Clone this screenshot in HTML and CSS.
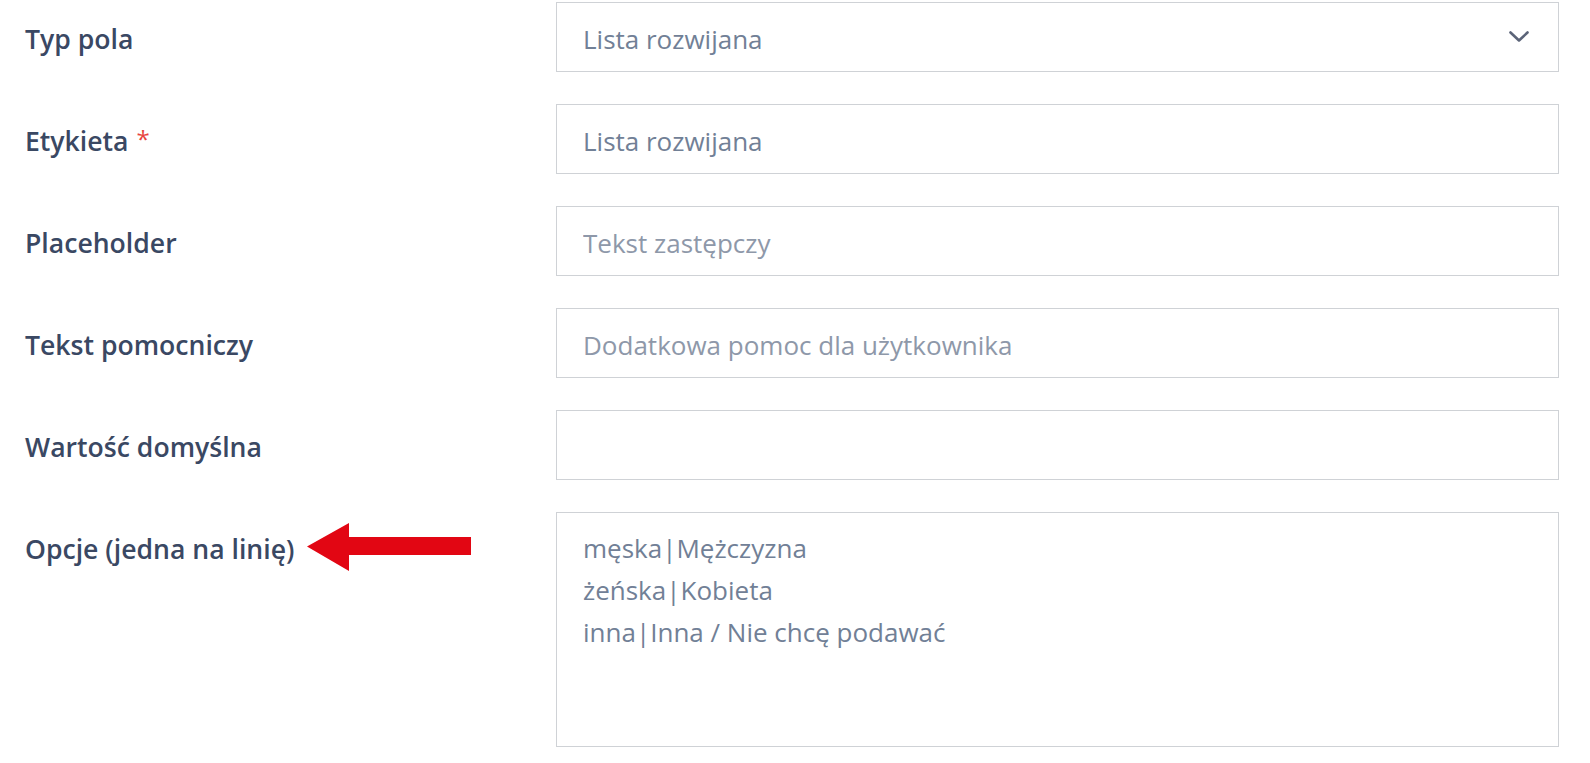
FILE: index.html
```html
<!DOCTYPE html>
<html lang="pl">
<head>
<meta charset="utf-8">
<title>Pole formularza</title>
<link rel="stylesheet" href="styles.css">
</head>
<body>
<form class="form">
  <div class="row">
    <label class="label" for="f-type">Typ pola</label>
    <div class="select">
      <span class="select-value" id="f-type">Lista rozwijana</span>
      <svg class="chevron" width="20" height="12" viewBox="0 0 20 12" aria-hidden="true">
        <path d="M1.5 1.5 L10 9.5 L18.5 1.5" fill="none" stroke="#5b6478" stroke-width="2.6" stroke-linecap="round" stroke-linejoin="round"/>
      </svg>
    </div>
  </div>
  <div class="row">
    <label class="label" for="f-label">Etykieta <span class="req">*</span></label>
    <input class="input" id="f-label" type="text" value="Lista rozwijana">
  </div>
  <div class="row">
    <label class="label" for="f-ph">Placeholder</label>
    <input class="input" id="f-ph" type="text" placeholder="Tekst zastępczy">
  </div>
  <div class="row">
    <label class="label" for="f-help">Tekst pomocniczy</label>
    <input class="input" id="f-help" type="text" placeholder="Dodatkowa pomoc dla użytkownika">
  </div>
  <div class="row">
    <label class="label" for="f-def">Wartość domyślna</label>
    <input class="input" id="f-def" type="text">
  </div>
  <div class="row row-top">
    <label class="label label-top" for="f-opts">
      <span>Opcje (jedna na linię)</span>
      <svg class="arrow" width="164" height="48" viewBox="0 0 164 48" aria-hidden="true">
        <polygon points="0,23.5 42,0 42,14 164,14 164,32 42,32 42,48" fill="#e20613"/>
      </svg>
    </label>
    <textarea class="textarea" id="f-opts">męska|Mężczyzna
żeńska|Kobieta
inna|Inna / Nie chcę podawać</textarea>
  </div>
</form>
</body>
</html>
```

FILE: styles.css
```css
html, body {
  margin: 0;
  padding: 0;
  background: #ffffff;
}

.form {
  display: flex;
  flex-direction: column;
  gap: 32px;
  padding: 2px 31px 0 25px;
  font-family: "Open Sans", "Noto Sans", "Liberation Sans", sans-serif;
}

.row {
  display: grid;
  grid-template-columns: 531px 1fr;
  align-items: center;
}

.row-top {
  align-items: start;
}

.label {
  font-size: 26.6px;
  font-weight: 600;
  color: #3a4863;
  line-height: 42px;
  display: flex;
  align-items: center;
  padding-top: 4px;
}

.label-top {
  padding-top: 14px;
}

.req {
  color: #e8453f;
  font-weight: 400;
  font-size: 24px;
  margin-left: 8px;
  margin-top: -4px;
}

.arrow {
  margin-left: 13px;
  margin-top: -3px;
  flex: none;
}

.select,
.input {
  box-sizing: border-box;
  height: 70px;
  border: 1px solid #cfd2d6;
  background: #fff;
  padding: 4px 29px 0 26px;
  font-family: inherit;
  font-size: 26px;
  color: #718096;
}

.select {
  display: flex;
  align-items: center;
  justify-content: space-between;
}

.chevron {
  margin-top: -4px;
}

.input {
  width: 100%;
  outline: none;
}

.input::placeholder {
  color: #8e98a9;
  opacity: 1;
}

.textarea {
  box-sizing: border-box;
  width: 100%;
  height: 235px;
  border: 1px solid #cfd2d6;
  padding: 14px 26px;
  font-family: inherit;
  font-size: 26px;
  line-height: 42px;
  color: #718096;
  resize: none;
  outline: none;
  display: block;
}
```
